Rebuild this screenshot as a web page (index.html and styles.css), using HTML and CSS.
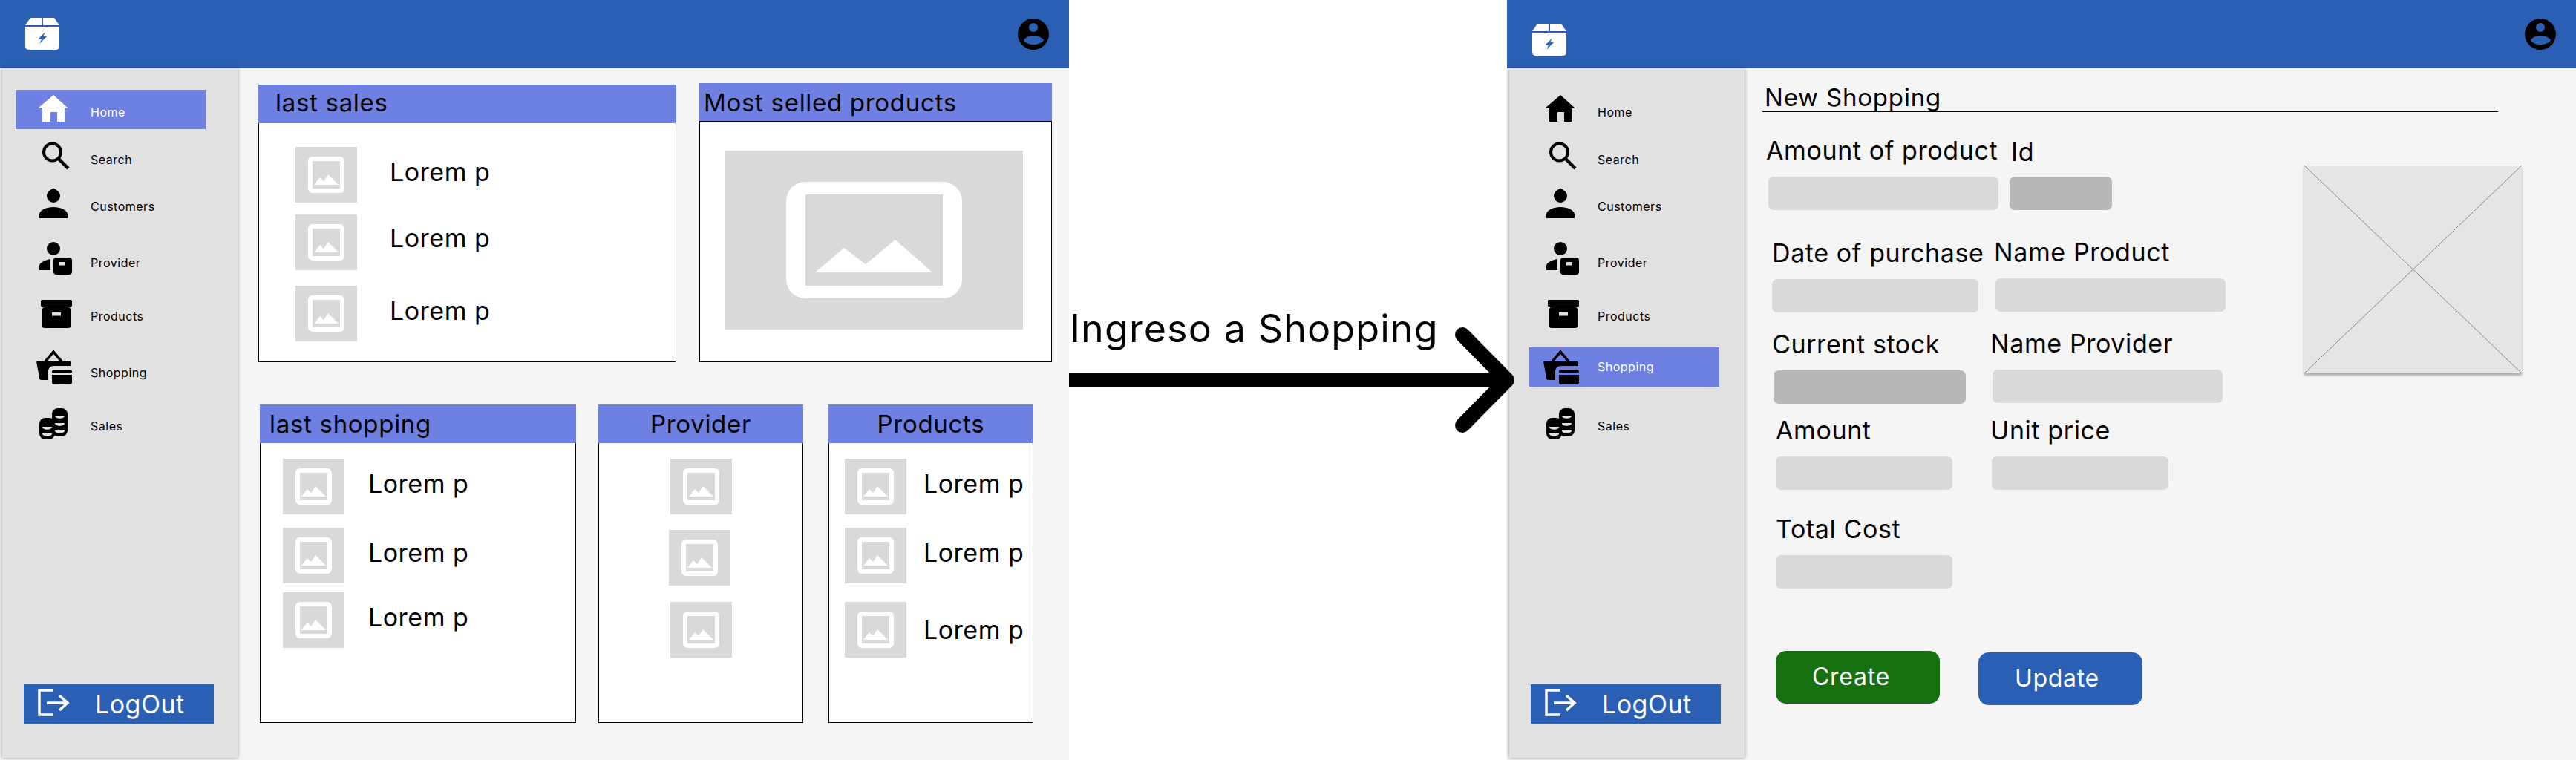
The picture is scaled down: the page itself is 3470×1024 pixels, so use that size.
FILE: index.html
```html
<!DOCTYPE html>
<html lang="en">

<head>
    <meta charset="UTF-8">
    <meta name="viewport" content="width=device-width, initial-scale=1.0">
    <title>Shopping flow</title>
    <link rel="stylesheet" href="styles.css">
</head>

<body>
    <svg class="sprites" aria-hidden="true">
        <symbol id="i-logo" viewBox="0 0 46 43">
            <path d="M7 0H22V10H0Z" />
            <path d="M24 0H39L46 10H24Z" />
            <path d="M0 12H46V38Q46 43 41 43H5Q0 43 0 38Z" />
            <path class="logo-bolt" d="M27 19L17 29H22L19 35L29 25H24Z" />
        </symbol>
        <symbol id="i-avatar" viewBox="0 0 42 42">
            <circle cx="21" cy="21" r="21" fill="#000" />
            <circle cx="21" cy="12" r="6" fill="#2b5fb3" />
            <path d="M8 29C12 21 30 21 35 29C30 37 12 37 8 29Z" fill="#2b5fb3" />
        </symbol>
        <symbol id="i-home" viewBox="0 0 64 53">
            <path d="M31 7L51 25H46V43H36V30H27V43H16V25H10Z" />
        </symbol>
        <symbol id="i-search" viewBox="0 0 64 53">
            <circle cx="29.5" cy="20" r="11.5" fill="none" stroke="currentColor" stroke-width="4" />
            <path d="M38 29L51 42" fill="none" stroke="currentColor" stroke-width="4.5" />
        </symbol>
        <symbol id="i-customers" viewBox="0 0 64 53">
            <circle cx="31" cy="16" r="9" />
            <path d="M27 8L31 5.5L35 8Z" />
            <path d="M12 46V41C12 35 22 31 31 31C40 31 50 35 50 41V46Z" />
        </symbol>
        <symbol id="i-provider" viewBox="0 0 64 53">
            <circle cx="31" cy="11" r="9" />
            <path d="M12 40V34C12 30 20 26 27 25V40Z" />
            <rect x="31" y="23" width="25" height="23" rx="4" />
            <rect class="icon-cut" x="39" y="29" width="8" height="4.5" />
        </symbol>
        <symbol id="i-products" viewBox="0 0 64 53">
            <rect x="14" y="8" width="42" height="9" rx="1.5" />
            <rect x="16" y="18" width="38" height="28" rx="3" />
            <rect class="icon-cut" x="29" y="25" width="12" height="4.5" />
        </symbol>
        <symbol id="i-shopping" viewBox="0 0 64 53">
            <path d="M20 15L31 2L42 15" fill="none" stroke="currentColor" stroke-width="3.5" />
            <path d="M8 15H54V21H32C27 21 24 24 24 29V40H15C13 40 12 39 12 37Z" />
            <path d="M29 30V29Q29 26 32 26H53Q56 26 56 29V30Z" />
            <path d="M29 33H56V43Q56 46 53 46H32Q29 46 29 43Z" />
        </symbol>
        <symbol id="i-sales" viewBox="0 0 64 53">
            <rect x="29" y="6" width="21" height="38" rx="8" />
            <rect x="12" y="19" width="21" height="29" rx="8" />
            <path class="icon-cut" d="M33 16H46C46 21 33 21 33 16Z" />
            <path class="icon-cut" d="M33 26H46C46 31 33 31 33 26Z" />
            <path class="icon-cut" d="M33 36H46C46 41 33 41 33 36Z" />
            <path class="icon-cut" d="M16 31H29C29 36 16 36 16 31Z" />
            <path class="icon-cut" d="M16 40H29C29 45 16 45 16 40Z" />
        </symbol>
        <symbol id="i-logout" viewBox="0 0 48 53">
            <path d="M26 8H7V41H26M17 25H44M34 15L45 25L34 35" fill="none" stroke="#fff" stroke-width="3.5" />
        </symbol>
        <symbol id="i-picture" viewBox="0 0 49 49">
            <rect x="3" y="3" width="43" height="43" rx="3" fill="none" stroke="#fff" stroke-width="6" />
            <path d="M8 38L16 28L21 33L27 24L41 38Z" fill="#fff" />
        </symbol>
    </svg>

    <div class="page">
        <section class="frame">
            <header class="topbar">
                <svg class="logo">
                    <use href="#i-logo" />
                </svg>
                <svg class="avatar">
                    <use href="#i-avatar" />
                </svg>
            </header>
            <div class="frame-body">
                <nav class="sidebar">
                    <a class="nav-item nav-item--active"><svg class="nav-icon"><use href="#i-home" /></svg><span>Home</span></a>
                    <a class="nav-item"><svg class="nav-icon"><use href="#i-search" /></svg><span>Search</span></a>
                    <a class="nav-item"><svg class="nav-icon"><use href="#i-customers" /></svg><span>Customers</span></a>
                    <a class="nav-item"><svg class="nav-icon"><use href="#i-provider" /></svg><span>Provider</span></a>
                    <a class="nav-item"><svg class="nav-icon"><use href="#i-products" /></svg><span>Products</span></a>
                    <a class="nav-item"><svg class="nav-icon"><use href="#i-shopping" /></svg><span>Shopping</span></a>
                    <a class="nav-item"><svg class="nav-icon"><use href="#i-sales" /></svg><span>Sales</span></a>
                    <a class="logout"><svg class="logout-icon"><use href="#i-logout" /></svg><span>LogOut</span></a>
                </nav>
                <main class="dashboard">
                    <div class="card-row card-row--top">
                        <article class="card card--sales">
                            <h2 class="card-title">last sales</h2>
                            <div class="card-body">
                                <div class="item"><div class="thumb"><svg class="thumb-icon"><use href="#i-picture" /></svg></div><span class="item-text">Lorem p</span></div>
                                <div class="item"><div class="thumb"><svg class="thumb-icon"><use href="#i-picture" /></svg></div><span class="item-text">Lorem p</span></div>
                                <div class="item"><div class="thumb"><svg class="thumb-icon"><use href="#i-picture" /></svg></div><span class="item-text">Lorem p</span></div>
                            </div>
                        </article>
                        <article class="card card--best">
                            <h2 class="card-title">Most selled products</h2>
                            <div class="card-body">
                                <div class="big-picture">
                                    <svg class="big-picture-icon" viewBox="0 0 237 157">
                                        <rect width="237" height="157" rx="26" fill="#fff" />
                                        <rect x="26" y="17" width="185" height="123" fill="#d9d9d9" />
                                        <path d="M39 122L78 89L107 111L147 78L197 122Z" fill="#fff" />
                                    </svg>
                                </div>
                            </div>
                        </article>
                    </div>
                    <div class="card-row card-row--bottom">
                        <article class="card card--shopping">
                            <h2 class="card-title">last shopping</h2>
                            <div class="card-body">
                                <div class="item"><div class="thumb"><svg class="thumb-icon"><use href="#i-picture" /></svg></div><span class="item-text">Lorem p</span></div>
                                <div class="item"><div class="thumb"><svg class="thumb-icon"><use href="#i-picture" /></svg></div><span class="item-text">Lorem p</span></div>
                                <div class="item"><div class="thumb"><svg class="thumb-icon"><use href="#i-picture" /></svg></div><span class="item-text">Lorem p</span></div>
                            </div>
                        </article>
                        <article class="card card--provider">
                            <h2 class="card-title">Provider</h2>
                            <div class="card-body">
                                <div class="item"><div class="thumb"><svg class="thumb-icon"><use href="#i-picture" /></svg></div></div>
                                <div class="item"><div class="thumb"><svg class="thumb-icon"><use href="#i-picture" /></svg></div></div>
                                <div class="item"><div class="thumb"><svg class="thumb-icon"><use href="#i-picture" /></svg></div></div>
                            </div>
                        </article>
                        <article class="card card--products">
                            <h2 class="card-title">Products</h2>
                            <div class="card-body">
                                <div class="item"><div class="thumb"><svg class="thumb-icon"><use href="#i-picture" /></svg></div><span class="item-text">Lorem p</span></div>
                                <div class="item"><div class="thumb"><svg class="thumb-icon"><use href="#i-picture" /></svg></div><span class="item-text">Lorem p</span></div>
                                <div class="item"><div class="thumb"><svg class="thumb-icon"><use href="#i-picture" /></svg></div><span class="item-text">Lorem p</span></div>
                            </div>
                        </article>
                    </div>
                </main>
            </div>
        </section>

        <div class="transition">
            <p class="transition-text">Ingreso a Shopping</p>
            <svg class="transition-arrow" viewBox="0 0 610 145">
                <path d="M0 71.5H585" fill="none" stroke="#000" stroke-width="19" />
                <path d="M530 11L590 72L530 133" fill="none" stroke="#000" stroke-width="20" stroke-linecap="round" stroke-linejoin="round" />
            </svg>
        </div>

        <section class="frame frame--shopping">
            <header class="topbar">
                <svg class="logo">
                    <use href="#i-logo" />
                </svg>
                <svg class="avatar">
                    <use href="#i-avatar" />
                </svg>
            </header>
            <div class="frame-body">
                <nav class="sidebar">
                    <a class="nav-item"><svg class="nav-icon"><use href="#i-home" /></svg><span>Home</span></a>
                    <a class="nav-item"><svg class="nav-icon"><use href="#i-search" /></svg><span>Search</span></a>
                    <a class="nav-item"><svg class="nav-icon"><use href="#i-customers" /></svg><span>Customers</span></a>
                    <a class="nav-item"><svg class="nav-icon"><use href="#i-provider" /></svg><span>Provider</span></a>
                    <a class="nav-item"><svg class="nav-icon"><use href="#i-products" /></svg><span>Products</span></a>
                    <a class="nav-item nav-item--active"><svg class="nav-icon"><use href="#i-shopping" /></svg><span>Shopping</span></a>
                    <a class="nav-item"><svg class="nav-icon"><use href="#i-sales" /></svg><span>Sales</span></a>
                    <a class="logout"><svg class="logout-icon"><use href="#i-logout" /></svg><span>LogOut</span></a>
                </nav>
                <main class="shopping">
                    <h1 class="shopping-title">New Shopping</h1>
                    <div class="shopping-area">
                        <form class="form">
                            <div class="form-row form-row--1">
                                <div class="field field--amount-product"><label>Amount of product</label><div class="input"></div></div>
                                <div class="field field--id"><label>Id</label><div class="input input--dark"></div></div>
                            </div>
                            <div class="form-row form-row--2">
                                <div class="field field--date"><label>Date of purchase</label><div class="input"></div></div>
                                <div class="field field--name-product"><label>Name Product</label><div class="input"></div></div>
                            </div>
                            <div class="form-row form-row--3">
                                <div class="field field--stock"><label>Current stock</label><div class="input input--dark"></div></div>
                                <div class="field field--name-provider"><label>Name Provider</label><div class="input"></div></div>
                            </div>
                            <div class="form-row form-row--4">
                                <div class="field field--small"><label>Amount</label><div class="input"></div></div>
                                <div class="field field--small field--price"><label>Unit price</label><div class="input"></div></div>
                            </div>
                            <div class="form-row form-row--5">
                                <div class="field field--small"><label>Total Cost</label><div class="input"></div></div>
                            </div>
                            <div class="form-buttons">
                                <button type="button" class="btn btn--create">Create</button>
                                <button type="button" class="btn btn--update">Update</button>
                            </div>
                        </form>
                        <svg class="preview" viewBox="0 0 293 280" preserveAspectRatio="none">
                            <path d="M0 0L293 280M293 0L0 280" fill="none" stroke="#8a8a8a" stroke-width="1" />
                        </svg>
                    </div>
                </main>
            </div>
        </section>
    </div>
</body>

</html>
```

FILE: styles.css
```css
/* reset start */
* {
    padding: 0;
    margin: 0;
    box-sizing: border-box;
}

html,
body {
    width: 3470px;
    height: 1024px;
}

body {
    overflow: hidden;
    background-color: #fff;
    color: #000;
    font-family: "Inter", "Liberation Sans", sans-serif;
}

/* reset end */
.sprites {
    display: none;
}

.page {
    display: flex;
    height: 1024px;
}

.frame {
    width: 1440px;
    height: 1024px;
    display: flex;
    flex-direction: column;
    background-color: #f5f5f5;
}

/* top bar */
.topbar {
    height: 92px;
    flex: none;
    display: flex;
    align-items: center;
    justify-content: space-between;
    padding: 0 27px 0 34px;
    background-color: #2b5fb3;
}

.logo {
    width: 46px;
    height: 43px;
    fill: #fff;
    margin-bottom: 1px;
}

.logo-bolt {
    fill: #2b5fb3;
}

.frame--shopping .logo {
    margin: 15px 0 0;
}

.avatar {
    width: 42px;
    height: 42px;
}

.frame-body {
    flex: 1;
    display: flex;
    min-height: 0;
}

/* sidebar */
.sidebar {
    width: 317px;
    margin: 0 0 3px 3px;
    flex: none;
    display: flex;
    flex-direction: column;
    padding-top: 29px;
    background-color: #e1e1e1;
    box-shadow: 0 0 5px rgba(0, 0, 0, .4);
}

.nav-item {
    width: 256px;
    height: 53px;
    flex: none;
    display: flex;
    align-items: center;
    margin-left: 18px;
    padding-left: 20px;
    font-size: 16px;
    letter-spacing: .5px;
    fill: currentColor;
}

.nav-item span {
    margin: 6px 0 0 17px;
}

.nav-item:nth-child(2) {
    margin-top: 11px;
}

.nav-item:nth-child(3) {
    margin-top: 10px;
}

.nav-item:nth-child(4),
.nav-item:nth-child(6) {
    margin-top: 23px;
}

.nav-item:nth-child(5),
.nav-item:nth-child(7) {
    margin-top: 19px;
}

.nav-icon {
    width: 64px;
    height: 53px;
    flex: none;
    color: #000;
    fill: #000;
    overflow: visible;
}

.icon-cut {
    fill: #e1e1e1;
}

.nav-item--active {
    background-color: #6e80e2;
    color: #fff;
}

.nav-item--active .nav-icon {
    color: #fff;
    fill: #fff;
}

.frame--shopping .nav-item--active {
    margin: 19px 0 4px 27px;
    padding-left: 11px;
}

.frame--shopping .nav-item--active span {
    margin-top: -2px;
}

.frame--shopping .nav-item--active .nav-icon {
    color: #000;
    fill: #000;
    margin-top: 8px;
}

.logout {
    width: 256px;
    height: 53px;
    flex: none;
    display: flex;
    align-items: center;
    margin: auto 0 46px 29px;
    padding-left: 14px;
    background-color: #2b5fb3;
    color: #fff;
    font-size: 34px;
    letter-spacing: .5px;
}

.logout-icon {
    width: 48px;
    height: 53px;
    flex: none;
}

.logout span {
    margin-left: 34px;
}

/* dashboard */
.dashboard {
    flex: 1;
}

.card-row {
    display: flex;
    align-items: flex-end;
}

.card-row--top {
    margin: 20px 0 0 28px;
    gap: 31px;
}

.card-row--bottom {
    margin: 57px 0 0 30px;
}

.card {
    display: flex;
    flex-direction: column;
}

.card--sales {
    width: 563px;
    height: 374px;
}

.card--best {
    width: 475px;
    height: 376px;
}

.card--shopping {
    width: 426px;
    height: 429px;
}

.card--provider {
    width: 276px;
    height: 429px;
    margin-left: 30px;
}

.card--products {
    width: 276px;
    height: 429px;
    margin-left: 34px;
}

.card-title {
    height: 52px;
    flex: none;
    padding-left: 23px;
    background-color: #6e80e2;
    font-size: 33px;
    font-weight: 400;
    line-height: 52px;
    letter-spacing: .7px;
    white-space: nowrap;
}

.card--sales .card-title {
    line-height: 48px;
}

.card--best .card-title {
    padding-left: 6px;
    border-bottom: 1px solid #000;
}

.card--shopping .card-title {
    padding-left: 13px;
}

.card--provider .card-title,
.card--products .card-title {
    padding-left: 0;
    text-align: center;
}

.card-body {
    flex: 1;
    display: flex;
    flex-direction: column;
    border: 1px solid #000;
    border-top: 0;
    background-color: #fff;
}

.item {
    display: flex;
    align-items: center;
}

.thumb {
    width: 83px;
    height: 75px;
    flex: none;
    display: flex;
    align-items: center;
    justify-content: center;
    background-color: #d9d9d9;
}

.thumb-icon {
    width: 49px;
    height: 49px;
}

.item-text {
    margin-bottom: 8px;
    font-size: 34px;
    letter-spacing: .5px;
    white-space: nowrap;
}

.card--sales .card-body {
    padding: 32px 0 0 49px;
}

.card--sales .item-text {
    margin-left: 44px;
}

.card--sales .item:nth-child(2) {
    margin-top: 16px;
}

.card--sales .item:nth-child(2) .item-text {
    margin-bottom: 12px;
}

.card--sales .item:nth-child(3) {
    margin-top: 21px;
}

.card--shopping .card-body,
.card--provider .card-body,
.card--products .card-body {
    padding-top: 21px;
}

.card--shopping .card-body {
    padding-left: 30px;
}

.card--shopping .item-text {
    margin-left: 32px;
}

.card--shopping .item:nth-child(2) {
    margin-top: 18px;
}

.card--shopping .item:nth-child(3) {
    margin-top: 12px;
}

.card--provider .item {
    justify-content: center;
}

.card--provider .item:nth-child(2) {
    margin: 21px 4px 0 0;
}

.card--provider .item:nth-child(3) {
    margin-top: 22px;
}

.card--products .card-body {
    padding-left: 21px;
}

.card--products .item-text {
    margin-left: 23px;
}

.card--products .item:nth-child(2) {
    margin-top: 18px;
}

.card--products .item:nth-child(3) {
    margin-top: 25px;
}

.card--products .item:nth-child(3) .item-text {
    margin-bottom: 0;
}

.card--best .card-body {
    padding: 39px 0 0 33px;
}

.big-picture {
    width: 402px;
    height: 241px;
    display: flex;
    align-items: center;
    justify-content: center;
    background-color: #d9d9d9;
}

.big-picture-icon {
    width: 237px;
    height: 157px;
}

/* arrow between the two screens */
.transition {
    width: 590px;
    flex: none;
    position: relative;
    z-index: 2;
    padding: 413px 0 0 1px;
}

.transition-text {
    font-size: 52px;
    line-height: 60px;
    letter-spacing: 1.1px;
    white-space: nowrap;
}

.transition-arrow {
    position: absolute;
    left: 0;
    top: 440px;
    width: 610px;
    height: 145px;
    overflow: visible;
}

/* new shopping form */
.shopping {
    flex: 1;
}

.shopping-title {
    width: 991px;
    height: 59px;
    margin-left: 24px;
    padding: 19px 0 0 3px;
    border-bottom: 1px solid #000;
    font-size: 33px;
    font-weight: 400;
    line-height: 40px;
    letter-spacing: .8px;
}

.shopping-area {
    display: flex;
    align-items: flex-start;
}

.form {
    width: 754px;
    flex: none;
    padding-top: 32px;
}

.form-row {
    display: flex;
    align-items: flex-start;
}

.field {
    flex: none;
    display: flex;
    flex-direction: column;
}

.field label {
    height: 40px;
    margin-bottom: 15px;
    font-size: 34px;
    line-height: 40px;
    letter-spacing: .6px;
    white-space: nowrap;
}

.input {
    height: 45px;
    border-radius: 7px;
    background-color: #d9d9d9;
}

.input--dark {
    background-color: #b8b8b8;
}

.form-row--2 {
    margin-top: 37px;
}

.form-row--3 {
    margin-top: 22px;
}

.form-row--4 {
    margin-top: 16px;
}

.form-row--5 {
    margin-top: 33px;
}

.field--amount-product {
    width: 310px;
    margin-left: 32px;
}

.field--amount-product label {
    margin-left: -3px;
}

.field--id {
    width: 138px;
    margin-left: 15px;
}

.field--id label {
    margin-left: 2px;
    line-height: 44px;
}

.field--date {
    width: 278px;
    margin: 1px 0 0 37px;
}

.field--name-product {
    width: 310px;
    margin-left: 23px;
}

.field--name-product label {
    margin-left: -2px;
}

.field--stock {
    width: 259px;
    margin: 1px 0 0 39px;
}

.field--stock label {
    margin-left: -2px;
}

.field--name-provider {
    width: 310px;
    margin-left: 36px;
}

.field--name-provider label {
    margin-left: -3px;
}

.field--small {
    width: 238px;
    margin-left: 42px;
}

.field--price {
    margin-left: 53px;
}

.field--price label {
    margin-left: -2px;
}

.form-buttons {
    display: flex;
    align-items: flex-start;
    gap: 52px;
    margin: 84px 0 0 42px;
}

.btn {
    width: 221px;
    height: 71px;
    padding: 0 0 3px 49px;
    border: 0;
    border-radius: 14px;
    color: #fff;
    font-family: inherit;
    font-size: 32px;
    letter-spacing: .7px;
    text-align: left;
}

.btn--create {
    background-color: #15700f;
}

.btn--update {
    margin-top: 2px;
    background-color: #2b5fb3;
}

.preview {
    width: 293px;
    height: 280px;
    flex: none;
    margin-top: 72px;
    background-color: #e5e5e5;
    box-shadow: 0 3px 3px rgba(0, 0, 0, .3);
}
```
